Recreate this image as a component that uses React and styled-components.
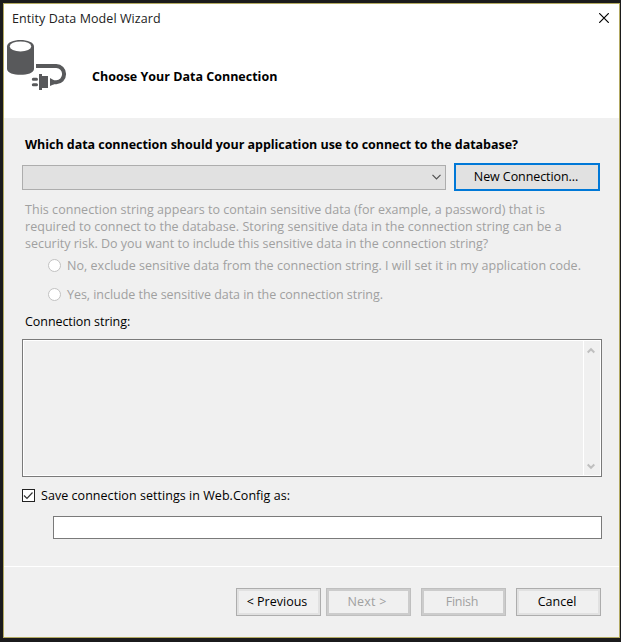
import React from "react";
import styled, { createGlobalStyle, css } from "styled-components";

const GlobalStyle = createGlobalStyle`
  * { box-sizing: border-box; }
  body { margin: 0; background: #1b1b1c; }
`;

const Desktop = styled.div`
  width: 621px;
  height: 642px;
  padding: 3px 1px 4px 3px;
  background: #1b1b1c;
  overflow: hidden;
`;

const Dialog = styled.div`
  display: flex;
  flex-direction: column;
  width: 617px;
  height: 635px;
  border: 1px solid #b3aa62;
  background: #f0f0f0;
  color: #000;
  font: 12.5px/17px "Open Sans", "Noto Sans", sans-serif;
`;

const Text = styled.span`
  display: block;
  white-space: nowrap;
  letter-spacing: ${(p) => p.$track || 0}px;
`;

const Header = styled.header`
  height: 114px;
  background: #fff;
`;

const TitleBar = styled.div`
  display: flex;
  justify-content: space-between;
  height: 34px;
  padding: 6px 10px 0 8px;
  color: #222;
`;

const CloseIcon = styled.svg`
  width: 10px;
  height: 10px;
  margin-top: 3px;
`;

const Banner = styled.div`
  display: flex;
  height: 80px;
`;

const DatabaseIcon = styled.svg`
  width: 66px;
  height: 56px;
  flex: none;
`;

const BannerTitle = styled.h1`
  margin: 30px 0 0 22px;
  font: inherit;
  font-weight: 700;
`;

const Body = styled.main`
  display: flex;
  flex-direction: column;
  height: 448px;
  padding: 18px 17px 0 18px;
`;

const Question = styled.h2`
  margin: 0 0 10px 3px;
  font: inherit;
  font-weight: 700;
`;

const ConnectionRow = styled.div`
  display: flex;
  align-items: center;
  gap: 8px;
  height: 28px;
`;

const Combo = styled.div`
  display: flex;
  align-items: center;
  justify-content: flex-end;
  width: 424px;
  height: 25px;
  padding-right: 4px;
  border: 1px solid #adadad;
  background: #e1e1e1;
`;

const Notice = styled.div`
  margin: 10px 0 0 3px;
  color: #a0a0a0;
`;

const RadioGroup = styled.div`
  display: flex;
  flex-direction: column;
  margin-top: -1px;
`;

const RadioRow = styled.div`
  display: flex;
  align-items: center;
  gap: 6px;
  height: 29px;
  padding-left: 26px;
  color: #a0a0a0;
`;

const Radio = styled.span`
  width: 13px;
  height: 13px;
  border: 1px solid #c2c2c2;
  border-radius: 50%;
  background: #fff;
`;

const FieldLabel = styled.div`
  margin: 4px 0 9px 3px;
`;

const StringBox = styled.div`
  display: flex;
  justify-content: flex-end;
  width: 580px;
  height: 138px;
  border: 1px solid #7a7a7a;
  padding: 1px;
  background: #f0f0f0;
  box-shadow: inset 0 0 0 1px #fff;
`;

const ScrollBar = styled.div`
  display: flex;
  flex-direction: column;
  justify-content: space-between;
  align-items: center;
  width: 17px;
  padding: 6px 2px 5px 0;
  border-left: 1px solid #fff;
`;

const Arrow = styled.svg`
  display: block;
  width: ${(p) => p.$w}px;
  height: ${(p) => p.$h}px;
`;

const SaveRow = styled.div`
  display: flex;
  align-items: center;
  gap: 6px;
  height: 17px;
  margin-top: 10px;
`;

const CheckBox = styled.svg`
  width: 13px;
  height: 13px;
`;

const NameInput = styled.div`
  width: 549px;
  height: 23px;
  margin: 12px 0 0 31px;
  border: 1px solid #7a7a7a;
  background: #fff;
`;

const Footer = styled.footer`
  display: flex;
  flex: 1;
  justify-content: flex-end;
  padding: 21px 18px 0 0;
  border-top: 1px solid #fff;
`;

const Button = styled.button`
  display: flex;
  align-items: center;
  justify-content: center;
  width: 85px;
  height: 28px;
  margin: 0 0 0 ${(p) => p.$gap || 0}px;
  padding: 0 3px 1px 0;
  border: 1px solid #adadad;
  background: #f0f0f0;
  box-shadow: inset 0 0 0 2px #e1e1e1;
  color: #000;
  font: inherit;
  &:disabled {
    border-color: #bfbfbf;
    box-shadow: inset 0 0 0 2px #cccccc;
    color: #a0a0a0;
  }
  ${(p) =>
    p.$primary &&
    css`
      width: 146px;
      border: 2px solid #0078d7;
      padding-right: 2px;
      background: #e1e1e1;
      box-shadow: none;
    `}
`;

const NOTICE = [
  ["This connection string appears to contain sensitive data (for example, a password) that is", 0.04],
  ["required to connect to the database. Storing sensitive data in the connection string can be a", 0.035],
  ["security risk. Do you want to include this sensitive data in the connection string?", -0.01],
];

const CHOICES = [
  ["No, exclude sensitive data from the connection string. I will set it in my application code.", 0.03],
  ["Yes, include the sensitive data in the connection string.", -0.04],
];

export default function App() {
  return (
    <Desktop>
      <GlobalStyle />
      <Dialog>
        <Header>
          <TitleBar>
            <Text $track={0.07}>Entity Data Model Wizard</Text>
            <CloseIcon viewBox="0 0 10 10">
              <path d="M.2.2l9.6 9.6M9.8.2L.2 9.8" stroke="#000" strokeWidth="1.2" />
            </CloseIcon>
          </TitleBar>
          <Banner>
            <DatabaseIcon viewBox="4 38 66 56">
              <path d="M7 46.5C7 37.8 34 37.8 34 46.5V69c0 7.8-27 7.8-27 0z" fill="#58595b" />
              <ellipse cx="20.5" cy="46.4" rx="10.7" ry="5" fill="#fff" />
              <path d="M36 66h20.3a7.8 8.1 0 0 1 0 16.2H53" fill="none" stroke="#58595b" strokeWidth="4" />
              <path d="M39 74h3v2h6v12h-6v2h-3z" fill="#58595b" />
              <path d="M50 78l4 2.2v4l-4 1.8z" fill="#58595b" />
              <path d="M33.3 79.3h3.2M33.3 84.7h3.2" stroke="#58595b" strokeWidth="3" strokeLinecap="round" />
            </DatabaseIcon>
            <BannerTitle>
              <Text>Choose Your Data Connection</Text>
            </BannerTitle>
          </Banner>
        </Header>
        <Body>
          <Question>
            <Text $track={-0.04}>
              Which data connection should your application use to connect to the database?
            </Text>
          </Question>
          <ConnectionRow>
            <Combo>
              <Arrow $w={9} $h={6} viewBox="0 0 9 6">
                <path d="M.5.8l4 4 4-4" fill="none" stroke="#505050" strokeWidth="1.2" />
              </Arrow>
            </Combo>
            <Button $primary>
              <Text $track={-0.08}>New Connection...</Text>
            </Button>
          </ConnectionRow>
          <Notice>
            {NOTICE.map(([line, track]) => (
              <Text key={line} $track={track}>{line}</Text>
            ))}
          </Notice>
          <RadioGroup>
            {CHOICES.map(([label, track]) => (
              <RadioRow key={label}>
                <Radio />
                <Text $track={track}>{label}</Text>
              </RadioRow>
            ))}
          </RadioGroup>
          <FieldLabel>
            <Text $track={-0.06}>Connection string:</Text>
          </FieldLabel>
          <StringBox>
            <ScrollBar>
              <Arrow $w={8} $h={7} viewBox="0 0 8 7">
                <path d="M.7 5.5L4 2.2l3.3 3.3" fill="none" stroke="#bfbfbf" strokeWidth="2" />
              </Arrow>
              <Arrow $w={8} $h={7} viewBox="0 0 8 7">
                <path d="M.7 1.5L4 4.8l3.3-3.3" fill="none" stroke="#bfbfbf" strokeWidth="2" />
              </Arrow>
            </ScrollBar>
          </StringBox>
          <SaveRow>
            <CheckBox viewBox="0 0 13 13">
              <rect x=".5" y=".5" width="12" height="12" fill="#fff" stroke="#222" />
              <path d="M2 6.5l3 3 5.5-6" fill="none" stroke="#333" strokeWidth="1.2" />
            </CheckBox>
            <Text $track={0.045}>Save connection settings in Web.Config as:</Text>
          </SaveRow>
          <NameInput />
        </Body>
        <Footer>
          <Button><Text>&lt; Previous</Text></Button>
          <Button $gap={5} disabled><Text $track={0.2}>Next &gt;</Text></Button>
          <Button $gap={10} disabled><Text $track={-0.3}>Finish</Text></Button>
          <Button $gap={10}><Text>Cancel</Text></Button>
        </Footer>
      </Dialog>
    </Desktop>
  );
}
